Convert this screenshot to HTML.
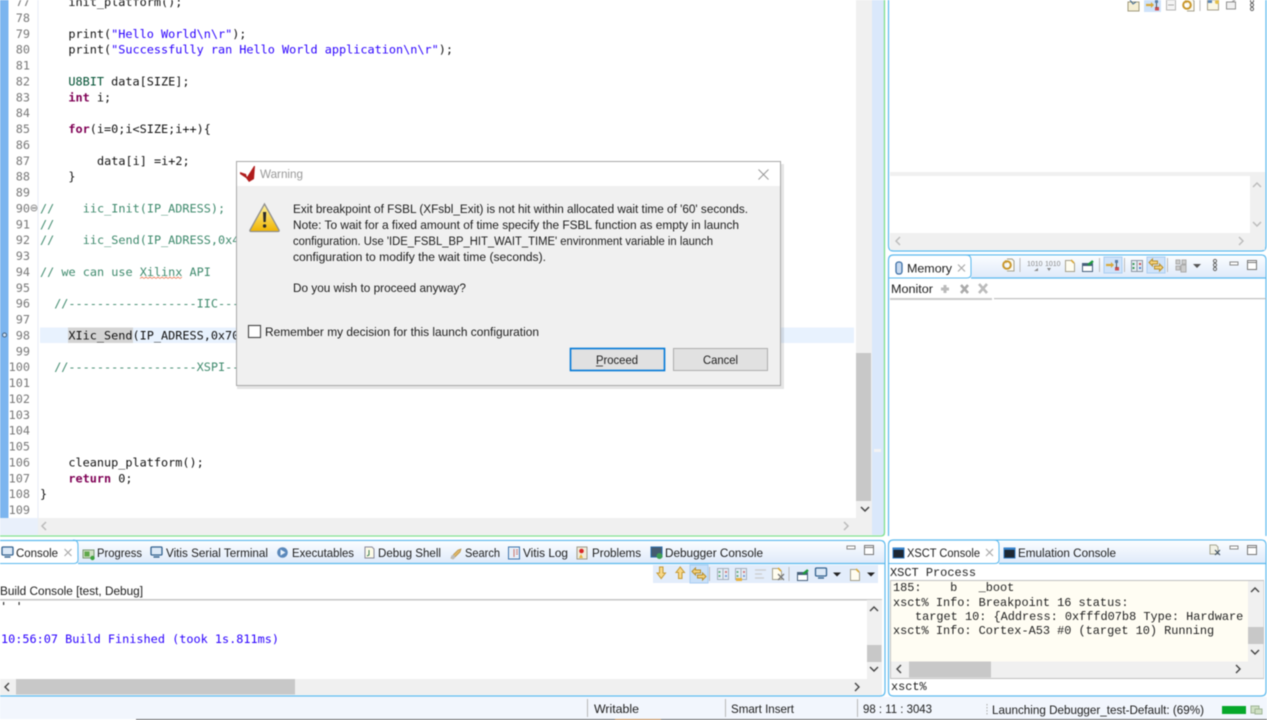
<!DOCTYPE html>
<html><head><meta charset="utf-8"><title>Vitis Debug</title>
<style>
html,body{margin:0;padding:0;background:#fff;width:1267px;height:720px;overflow:hidden}
svg{display:block;position:absolute;left:0;top:0;filter:blur(.4px)}
.c{font-family:"DejaVu Sans Mono","Liberation Mono",monospace;font-size:11.84px;fill:#111;white-space:pre}
.n{fill:#787878;text-anchor:end}
.g{fill:#3f8a6d}
.k{fill:#7f0055;font-weight:bold}
.s{fill:#2a00ff}
.u{font-family:"Liberation Sans",sans-serif;font-size:12.4px;fill:#1c1c1c}
.x{font-family:"Liberation Mono",monospace;font-size:11.9px;fill:#222;white-space:pre}
</style></head><body>
<svg width="1267" height="720" viewBox="0 0 1267 720" xmlns="http://www.w3.org/2000/svg">
<defs>
<linearGradient id="tb" x1="0" y1="0" x2="0" y2="1"><stop offset="0" stop-color="#fbfdff"/><stop offset="1" stop-color="#dfeafa"/></linearGradient>
<linearGradient id="wy" x1="0" y1="0" x2="0" y2="1"><stop offset="0" stop-color="#fff3a0"/><stop offset="1" stop-color="#f0b400"/></linearGradient>
<g id="chain" fill="none" stroke="#666" stroke-width="1"><circle cx="0" cy="-4" r="1.6"/><circle cx="0" cy="0" r="1.6"/><circle cx="0" cy="4" r="1.6"/></g>
<g id="min"><rect x="-4" y="-2" width="8" height="3" fill="#fff" stroke="#888"/></g>
<g id="max"><rect x="-4.5" y="-4.5" width="9" height="9" fill="#fff" stroke="#777"/><path d="M-4.5-2.5h9" stroke="#777"/></g>
<g id="close" stroke="#aaa" stroke-width="1.2" fill="none"><path d="M-3.5-3.5l7 7M3.5-3.5l-7 7"/></g>
<g id="mon"><rect x="-5.5" y="-5" width="11" height="8" rx="1" fill="#dce9f7" stroke="#33628f" stroke-width="1.3"/><path d="M-3 5h6" stroke="#33628f" stroke-width="1.4"/></g>
<g id="term"><rect x="-5.5" y="-5" width="11" height="10" fill="#1d2733" stroke="#2f78c0"/><path d="M-5.5-4h11" stroke="#3a8ad6" stroke-width="1.5"/></g>
<g id="ar"><path d="M-4-1.5h8L0 2.5z" fill="#222"/></g>
<g id="gold"><path d="M-7-2.500l3.500-3.500v2h5v3h-5v2z" fill="#f3d27c" stroke="#b98f2e" stroke-width="1"/><path d="M7 2.500l-3.500 3.500v-2h-5v-3h5v-2z" fill="#f3d27c" stroke="#b98f2e" stroke-width="1"/></g>
<g id="docgold"><path d="M-1-6h5l2 2v10h-7" fill="#fbfaf0" stroke="#a5a08c"/><circle cx="-1" cy="0" r="3.800" fill="none" stroke="#c9972c" stroke-width="2"/><path d="M-3-5l3 1-2 2.500z" fill="#c9972c"/></g>
<g id="doc"><path d="M-4.5-5.5h6l3 3v8h-9z" fill="#fffdf0" stroke="#a5a08c"/><path d="M1-6l3 3" stroke="#d9a93a" stroke-width="1.6"/></g>
<g id="pin"><rect x="-5.5" y="-2.5" width="10" height="8" fill="#fff" stroke="#47607c"/><path d="M-5.5-1h10" stroke="#47607c" stroke-width="2"/><path d="M0-1l5-4" stroke="#1e9a3c" stroke-width="2.4"/></g>
<g id="stack"><rect x="-5.500" y="-5.500" width="11" height="11" fill="#e6edf4" stroke="#8b97a4"/><path d="M0-5.500v11" stroke="#8b97a4"/><path d="M-3.500-3v2M-3.500 1v2" stroke="#3c9a5a" stroke-width="2"/><path d="M3-3v2" stroke="#cf4d4d" stroke-width="2"/><path d="M3 1v2" stroke="#4d7fcf" stroke-width="2"/></g>
<g id="flow"><path d="M-7 0h6" stroke="#d9a93a" stroke-width="2.2"/><path d="M-2-3l3 3-3 3z" fill="#d9a93a"/><rect x="2" y="-5" width="3" height="3" fill="#5a7ea6"/><rect x="2" y="2" width="4" height="3.5" fill="#cf4d4d"/><path d="M3.500-2v5" stroke="#555"/></g>
</defs>

<rect width="1267" height="720" fill="#fff"/>

<!-- editor chrome -->
<rect x="0" y="0" width="8.500" height="518" fill="#7cb5ef"/>
<rect x="37.500" y="0" width="1" height="518" fill="#e6edf6"/>
<rect x="0" y="518" width="38" height="17" fill="#e9f0fb"/>
<rect x="38" y="518" width="834" height="17" fill="#f0f0f0"/>
<rect x="856" y="0" width="16" height="518" fill="#f0f0f0"/>
<rect x="856" y="353" width="15" height="148" fill="#c8c8c8"/>
<path d="M861 507l4 4 4-4" fill="none" stroke="#444" stroke-width="1.500"/>
<path d="M844 522l4 4-4 4" fill="none" stroke="#bbb" stroke-width="1.500"/>
<path d="M46 522l-4 4 4 4" fill="none" stroke="#bbb" stroke-width="1.500"/>
<rect x="872" y="0" width="12" height="535" fill="#dae8fb"/>
<rect x="874" y="449" width="7" height="3" fill="#f3f3f3"/>
<path d="M0 536H881q3.500 0 3.500-3.500V0" fill="none" stroke="#7fe08f" stroke-width="1.300"/>

<!-- current line -->
<rect x="40" y="327.500" width="814" height="15.500" fill="#e8f2fe"/>
<rect x="68" y="327.500" width="65" height="15.500" fill="#d4d4d4"/>

<!-- line numbers -->
<text x="30" y="22" class="c n">78</text><text x="30" y="6.100" class="c n">77</text><text x="30" y="37.900" class="c n">79</text><text x="30" y="53.700" class="c n">80</text><text x="30" y="69.600" class="c n">81</text><text x="30" y="85.500" class="c n">82</text><text x="30" y="101.400" class="c n">83</text><text x="30" y="117.200" class="c n">84</text><text x="30" y="133.100" class="c n">85</text><text x="30" y="149" class="c n">86</text><text x="30" y="164.800" class="c n">87</text><text x="30" y="180.700" class="c n">88</text><text x="30" y="196.600" class="c n">89</text><text x="30" y="212.500" class="c n">90</text><text x="30" y="228.300" class="c n">91</text><text x="30" y="244.200" class="c n">92</text><text x="30" y="260.100" class="c n">93</text><text x="30" y="276" class="c n">94</text><text x="30" y="291.800" class="c n">95</text><text x="30" y="307.700" class="c n">96</text><text x="30" y="323.600" class="c n">97</text><text x="30" y="339.400" class="c n">98</text><text x="30" y="355.300" class="c n">99</text><text x="30" y="371.200" class="c n">100</text><text x="30" y="387.100" class="c n">101</text><text x="30" y="402.900" class="c n">102</text><text x="30" y="418.800" class="c n">103</text><text x="30" y="434.700" class="c n">104</text><text x="30" y="450.500" class="c n">105</text><text x="30" y="466.400" class="c n">106</text><text x="30" y="482.300" class="c n">107</text><text x="30" y="498.200" class="c n">108</text><text x="30" y="514" class="c n">109</text>
<circle cx="34" cy="208" r="3" fill="#eee" stroke="#999"/><path d="M32 208h4" stroke="#777"/>
<circle cx="4.500" cy="335" r="2" fill="#cfe2f5" stroke="#44617f"/>

<!-- code -->
<text x="68.400" y="6.100" class="c">init_platform();</text>
<text x="68.400" y="37.900" class="c">print(<tspan class="s">"Hello World\n\r"</tspan>);</text>
<text x="68.400" y="53.700" class="c">print(<tspan class="s">"Successfully ran Hello World application\n\r"</tspan>);</text>
<text x="68.400" y="85.500" class="c"><tspan fill="#005032">U8BIT</tspan> data[SIZE];</text>
<text x="68.400" y="101.400" class="c"><tspan class="k">int</tspan> i;</text>
<text x="68.400" y="133.100" class="c"><tspan class="k">for</tspan>(i=0;i&lt;SIZE;i++){</text>
<text x="97" y="164.800" class="c">data[i] =i+2;</text>
<text x="68.400" y="180.700" class="c">}</text>
<text x="40" y="212.500" class="c g" xml:space="preserve">//    iic_Init(IP_ADRESS);</text>
<text x="40" y="228.300" class="c g">//</text>
<text x="40" y="244.200" class="c g" xml:space="preserve">//    iic_Send(IP_ADRESS,0x4</text>
<text x="40" y="276" class="c g">// we can use Xilinx API</text>
<path d="M140 278.500l2-1.500 2 1.500 2-1.500 2 1.500 2-1.500 2 1.500 2-1.500 2 1.500 2-1.500 2 1.500 2-1.500 2 1.500 2-1.500 2 1.500 2-1.500 2 1.500 2-1.500 2 1.500 2-1.500 2 1.500 2-1.500" fill="none" stroke="#f08a6a" stroke-width=".8"/>
<text x="54.200" y="307.700" class="c g">//------------------IIC------</text>
<text x="68.400" y="339.400" class="c">XIic_Send(IP_ADRESS,0x70</text>
<text x="54.200" y="371.200" class="c g">//------------------XSPI-----</text>
<text x="68.400" y="466.400" class="c">cleanup_platform();</text>
<text x="68.400" y="482.300" class="c"><tspan class="k">return</tspan> 0;</text>
<text x="40" y="498.200" class="c">}</text>

<!-- right top panel -->
<path d="M888.500 0V246q0 5 5 5H1261q5 0 5-5V0" fill="#fff" stroke="#5ab9ee" stroke-width="1.200"/>
<rect x="890" y="172" width="375" height="4" fill="#f0f0f0"/>
<rect x="1250" y="176" width="15" height="57" fill="#f0f0f0"/>
<rect x="890" y="233" width="375" height="17" fill="#f0f0f0"/>
<path d="M1253 187l4-4 4 4M1253 222l4 4 4-4" fill="none" stroke="#bbb" stroke-width="1.400"/>
<path d="M900 237l-4 4 4 4M1239 237l4 4-4 4" fill="none" stroke="#bbb" stroke-width="1.400"/>
<rect x="1144" y="0" width="17" height="12" fill="#cfe3fa"/>
<g transform="translate(1133,5)"><rect x="-5" y="-3" width="11" height="9" fill="#f6efd4" stroke="#a09a7c"/><path d="M-3-5l3 4 3-2" stroke="#34618e" fill="none"/></g>
<use href="#flow" transform="translate(1153,5)"/>
<g transform="translate(1171,5)"><rect x="-4.500" y="-5" width="9" height="10" fill="#f4f4f4" stroke="#b5b5b5"/><path d="M-3 0h6" stroke="#aaa"/></g>
<use href="#docgold" transform="translate(1188,5)"/>
<rect x="1199.500" y="0" width="1" height="11" fill="#bbb"/>
<rect x="1207.500" y="0" width="11" height="10" fill="#fbf8e6" stroke="#a5a08c"/><rect x="1208" y="0" width="4" height="3" fill="#5a86b8"/><circle cx="1217" cy="2" r="2" fill="#e5c04a"/>
<rect x="1226.500" y="2" width="9" height="7" fill="#f2f2f2" stroke="#909090"/><path d="M1232 2l4-3" stroke="#999" stroke-width="1.400"/>
<use href="#chain" transform="translate(1252,5)"/>

<!-- memory panel -->
<path d="M888.500 536V260q0-5 5-5H1261q5 0 5 5V536" fill="#fff" stroke="#5ab9ee" stroke-width="1.200"/>
<path d="M971 278H1265.500V260q0-4.500-4.500-4.500H970" fill="url(#tb)"/>
<path d="M889 278H967q4 0 4-4V260q0-5-5-5" fill="none" stroke="#5ab9ee"/>
<path d="M971 278H1266" stroke="#5ab9ee" stroke-width="1.200"/>
<rect x="896" y="262" width="6" height="12" rx="2.500" fill="#c8daf0" stroke="#3b6ea5" stroke-width="1.300"/>
<text x="907" y="272.500" class="u" textLength="45" lengthAdjust="spacingAndGlyphs">Memory</text>
<use href="#close" transform="translate(961.500,268)"/>
<use href="#docgold" transform="translate(1008,265)"/>
<rect x="1019.500" y="258" width="1" height="14" fill="#bbb"/>
<text x="1027" y="266" font-family="Liberation Sans" font-size="7" fill="#888">1010</text><path d="M1034 271l4-3v3z" fill="#888"/>
<text x="1045" y="266" font-family="Liberation Sans" font-size="7" fill="#888">1010</text><path d="M1047 268h4l-2 3z" fill="#888"/>
<use href="#doc" transform="translate(1070,266)"/>
<use href="#pin" transform="translate(1088,266)"/>
<rect x="1099" y="258" width="1" height="14" fill="#bbb"/>
<rect x="1104" y="257" width="18" height="16" fill="#cfe3fa" stroke="#a9cdf2"/>
<use href="#flow" transform="translate(1113,265)"/>
<rect x="1124" y="258" width="1" height="14" fill="#bbb"/>
<use href="#stack" transform="translate(1137,266)"/>
<rect x="1147" y="257" width="18" height="16" fill="#cfe3fa" stroke="#a9cdf2"/>
<use href="#gold" transform="translate(1156,265)"/>
<rect x="1167" y="258" width="1" height="14" fill="#bbb"/>
<g transform="translate(1181,265)" fill="#ccc" stroke="#aaa"><rect x="-5" y="-5" width="4" height="4"/><rect x="1" y="-5" width="4" height="4"/><rect x="-5" y="1" width="4" height="4"/><rect x="0" y="0" width="5" height="7"/></g>
<path d="M1193 264h8l-4 4z" fill="#555"/>
<use href="#chain" transform="translate(1215,265)"/>
<use href="#min" transform="translate(1234,264)"/>
<use href="#max" transform="translate(1252,265)"/>
<text x="891" y="293" class="u" textLength="42" lengthAdjust="spacingAndGlyphs">Monitor</text>
<path d="M945 285v8M941 289h8" stroke="#bbb" stroke-width="3"/>
<path d="M961 285l7 8M968 285l-7 8" stroke="#aaa" stroke-width="2.600"/>
<path d="M979 284l8 9M987 284l-8 9" stroke="#bbb" stroke-width="2.600"/>
<rect x="890" y="298" width="102" height="2" fill="#ccc"/>
<rect x="994" y="298" width="272" height="1.200" fill="#c0c0c0"/>

<!-- bottom left console panel -->
<path d="M0 540.500H880q5 0 5 5V691q0 5-5 5H0" fill="#fff" stroke="#5ab9ee" stroke-width="1.200"/>
<path d="M78 563.500H884.500V546q0-5-5-5H76z" fill="url(#tb)"/>
<path d="M0 563.500H74q4 0 4-4V545q0-5-5-5" fill="none" stroke="#5ab9ee"/>
<path d="M78 563.500H885" stroke="#5ab9ee" stroke-width="1.200"/>
<use href="#mon" transform="translate(7.500,552)"/>
<text x="16" y="557" class="u" textLength="42" lengthAdjust="spacingAndGlyphs">Console</text>
<use href="#close" transform="translate(68,552.500)"/>
<g transform="translate(88.500,554)"><rect x="-5.500" y="-4" width="11" height="8" fill="#cfe0c4" stroke="#7c9a72"/><rect x="-4" y="-2.500" width="5" height="5" fill="#5fa84a"/><circle cx="4" cy="4" r="2.200" fill="#3ba03b"/></g>
<text x="97" y="557" class="u" textLength="45" lengthAdjust="spacingAndGlyphs">Progress</text>
<use href="#mon" transform="translate(156.500,552)"/>
<text x="166" y="557" class="u" textLength="102" lengthAdjust="spacingAndGlyphs">Vitis Serial Terminal</text>
<circle cx="282.500" cy="552.500" r="5.300" fill="#5a88bb"/><path d="M280.500 549.500l5 3-5 3z" fill="#eaf2fb"/>
<text x="292" y="557" class="u" textLength="62" lengthAdjust="spacingAndGlyphs">Executables</text>
<g transform="translate(369,553)"><path d="M-4-6h7l2 2v9h-9z" fill="#fdfbe8" stroke="#889"/><path d="M0-3v5l-2 1" stroke="#3a7a55" fill="none"/></g>
<text x="378" y="557" class="u" textLength="63" lengthAdjust="spacingAndGlyphs">Debug Shell</text>
<path d="M451 558l3-4 4-4 3-1-1 3-4 4-3 3z" fill="#e0b868" stroke="#b08a40" stroke-width=".7"/><circle cx="453" cy="557" r="2" fill="#bbb"/>
<text x="465" y="557" class="u" textLength="35" lengthAdjust="spacingAndGlyphs">Search</text>
<g transform="translate(514,553)"><rect x="-5.500" y="-6" width="11" height="12" fill="#e8eff8" stroke="#3f75ad"/><path d="M0-4v8M2-3h2M2-1h2M2 1h2" stroke="#c9756e"/></g>
<text x="523" y="557" class="u" textLength="45" lengthAdjust="spacingAndGlyphs">Vitis Log</text>
<g transform="translate(582,553)"><rect x="-5" y="-6" width="10" height="12" fill="#f1ecda" stroke="#9d9a8a"/><circle cx="-.500" cy="-2" r="2.300" fill="#d92626"/><path d="M-3 5l2-4 2 4z" fill="#e4b13a"/></g>
<text x="592" y="557" class="u" textLength="49" lengthAdjust="spacingAndGlyphs">Problems</text>
<g transform="translate(656.500,553)"><rect x="-5.500" y="-6" width="11" height="10" fill="#445c70" stroke="#2d6da8"/><circle cx="3" cy="3" r="3" fill="#3d9e55"/></g>
<text x="665" y="557" class="u" textLength="98" lengthAdjust="spacingAndGlyphs">Debugger Console</text>
<use href="#min" transform="translate(851,548)"/>
<use href="#max" transform="translate(869,550)"/>

<!-- console toolbar -->
<rect x="653" y="565" width="225" height="18" fill="#e3edfb"/>
<path d="M659.500 567h3.500v6h2.500l-4.300 5.500-4.200-5.500h2.500z" fill="#f8d98a" stroke="#c69a35"/>
<path d="M678.500 578.500h3.500v-6h2.500l-4.300-5.500-4.200 5.500h2.500z" fill="#f8d98a" stroke="#c69a35"/>
<rect x="690" y="565" width="18" height="18" fill="#c9e0f9" stroke="#a9cdf2"/>
<use href="#gold" transform="translate(699,574)"/>
<rect x="709" y="567" width="1" height="14" fill="#bbb"/>
<g opacity=".7"><use href="#stack" transform="translate(723,574)"/><use href="#stack" transform="translate(741,574)"/></g>
<path d="M736 578h6v3h-6z" fill="#e6b23d"/>
<path d="M755 570h11M755 574h7M755 578h9" stroke="#ccc" stroke-width="1.300"/>
<use href="#doc" transform="translate(777,574)"/><path d="M778 574l6 6M784 574l-6 6" stroke="#777" stroke-width="1.300"/>
<rect x="788.500" y="567" width="1" height="14" fill="#bbb"/>
<use href="#pin" transform="translate(803,575)"/>
<use href="#mon" transform="translate(821,573)"/>
<use href="#ar" transform="translate(837,574)"/>
<use href="#doc" transform="translate(855,575)"/>
<use href="#ar" transform="translate(871,574)"/>

<text x="0" y="595" class="u" textLength="143" lengthAdjust="spacingAndGlyphs">Build Console [test, Debug]</text>
<rect x="0" y="599" width="882" height="1.500" fill="#c6c6c6"/>
<rect x="3" y="602" width="1.200" height="3" fill="#333"/><rect x="18.500" y="602" width="1.200" height="3" fill="#333"/>
<text x="1" y="643" class="c s" textLength="278" lengthAdjust="spacingAndGlyphs">10:56:07 Build Finished (took 1s.811ms)</text>
<rect x="867" y="600" width="15" height="79" fill="#f0f0f0"/>
<rect x="867" y="645" width="14.500" height="17" fill="#c8c8c8"/>
<path d="M870 611l4-4 4 4M870 667l4 4 4-4" fill="none" stroke="#444" stroke-width="1.400"/>
<rect x="0" y="679" width="882" height="16" fill="#f0f0f0"/>
<rect x="16" y="679" width="279" height="15.500" fill="#c8c8c8"/>
<path d="M9 683l-4 4 4 4M855 683l4 4-4 4" fill="none" stroke="#444" stroke-width="1.400"/>

<!-- XSCT panel -->
<path d="M888.500 691V545q0-5 5-5H1261q5 0 5 5V691q0 5-5 5H893.500q-5 0-5-5z" fill="#fff" stroke="#5ab9ee" stroke-width="1.200"/>
<path d="M999 563.500H1265.500V545q0-4.500-4.500-4.500H998z" fill="url(#tb)"/>
<path d="M889 563.500H995q4 0 4-4V545q0-5-5-5" fill="none" stroke="#5ab9ee"/>
<path d="M999 563.500H1266" stroke="#5ab9ee" stroke-width="1.200"/>
<use href="#term" transform="translate(898.500,553)"/>
<text x="907" y="557" class="u" textLength="73" lengthAdjust="spacingAndGlyphs">XSCT Console</text>
<use href="#close" transform="translate(989.500,552.500)"/>
<use href="#term" transform="translate(1009.500,553)"/>
<text x="1018" y="557" class="u" textLength="98" lengthAdjust="spacingAndGlyphs">Emulation Console</text>
<g transform="translate(1214,550)"><path d="M-4-5h6l2 2v7h-8z" fill="#f2f2e6" stroke="#a5a590"/><path d="M1 0l5 5M6 0l-5 5" stroke="#456" stroke-width="1.200"/></g>
<use href="#min" transform="translate(1234,548)"/>
<use href="#max" transform="translate(1252,550)"/>
<text x="890" y="576" class="x" textLength="86" lengthAdjust="spacingAndGlyphs">XSCT Process</text>
<rect x="890.500" y="580.500" width="373" height="98" fill="#fffdf3" stroke="#c0c0c0"/>
<text x="893" y="591" class="x" xml:space="preserve">185:    b   _boot</text>
<text x="893" y="606" class="x">xsct% Info: Breakpoint 16 status:</text>
<text x="915" y="620" class="x">target 10: {Address: 0xfffd07b8 Type: Hardware</text>
<text x="893" y="634" class="x">xsct% Info: Cortex-A53 #0 (target 10) Running</text>
<rect x="1248" y="581" width="15.500" height="97" fill="#f0f0f0"/>
<rect x="1248" y="627" width="15.500" height="17" fill="#c8c8c8"/>
<path d="M1251 592l4-4 4 4M1251 650l4 4 4-4" fill="none" stroke="#444" stroke-width="1.400"/>
<rect x="891" y="661.500" width="372.500" height="16.500" fill="#f0f0f0"/>
<rect x="909" y="661.500" width="82" height="16" fill="#c8c8c8"/>
<path d="M901 665l-4 4 4 4M1236 665l4 4-4 4" fill="none" stroke="#444" stroke-width="1.400"/>
<text x="891" y="690" class="x">xsct%</text>

<!-- status bar -->
<rect x="0" y="697" width="1267" height="22" fill="#f2f6fd"/>
<rect x="136" y="719" width="1131" height="1" fill="#666"/>
<rect x="615" y="719" width="46" height="1" fill="#c08a50"/>
<rect x="587" y="699" width="1" height="18" fill="#b8b8b8"/>
<rect x="725" y="699" width="1" height="18" fill="#b8b8b8"/>
<rect x="857" y="699" width="1" height="18" fill="#b8b8b8"/>
<path d="M987 704v12" stroke="#aaa" stroke-dasharray="1.500 1.500"/>
<text x="594" y="713" class="u" textLength="45" lengthAdjust="spacingAndGlyphs">Writable</text>
<text x="731" y="713" class="u" textLength="63" lengthAdjust="spacingAndGlyphs">Smart Insert</text>
<text x="863" y="713" class="u" textLength="69" lengthAdjust="spacingAndGlyphs">98 : 11 : 3043</text>
<text x="992" y="714" class="u" textLength="212" lengthAdjust="spacingAndGlyphs">Launching Debugger_test-Default: (69%)</text>
<rect x="1222" y="706" width="24" height="8" fill="#06a82a"/>
<rect x="1251" y="706" width="8" height="7" fill="#cfe0c4" stroke="#9fb596"/><rect x="1255" y="709" width="7" height="5" fill="#cfe0c4" stroke="#9fb596"/>

<!-- dialog -->
<rect x="237" y="164" width="547" height="225" fill="#000" opacity=".1"/>
<rect x="236.500" y="161.500" width="544" height="224" fill="#f0f0f0" stroke="#a8a8a8"/>
<rect x="237" y="162" width="543" height="24" fill="#fff"/>
<path d="M240 172l6 2 1 3 7-11 1 0-1 13-5 3-3-4-6-4z" fill="#b01c1c"/>
<text x="260" y="178" class="u" style="fill:#999" textLength="43" lengthAdjust="spacingAndGlyphs">Warning</text>
<path d="M758.500 169.500l10 10M768.500 169.500l-10 10" stroke="#9a9a9a" stroke-width="1"/>
<path d="M264.500 204l14.500 26q.5 1.500-1 1.500h-27q-1.500 0-1-1.500z" fill="url(#wy)" stroke="#8f8f8f" stroke-width="1.300"/>
<path d="M263 212h3.200l-.5 10h-2.200z" fill="#2a2a2a"/><circle cx="264.600" cy="226" r="1.700" fill="#2a2a2a"/>
<text x="293" y="213" class="u" textLength="455" lengthAdjust="spacingAndGlyphs">Exit breakpoint of FSBL (XFsbl_Exit) is not hit within allocated wait time of '60' seconds.</text>
<text x="293" y="229" class="u" textLength="446" lengthAdjust="spacingAndGlyphs">Note: To wait for a fixed amount of time specify the FSBL function as empty in launch</text>
<text x="293" y="245" class="u" textLength="420" lengthAdjust="spacingAndGlyphs">configuration. Use 'IDE_FSBL_BP_HIT_WAIT_TIME' environment variable in launch</text>
<text x="293" y="261" class="u" textLength="253" lengthAdjust="spacingAndGlyphs">configuration to modify the wait time (seconds).</text>
<text x="293" y="292" class="u" textLength="173" lengthAdjust="spacingAndGlyphs">Do you wish to proceed anyway?</text>
<rect x="248.500" y="325.500" width="12" height="12" fill="#fff" stroke="#444" stroke-width="1.100"/>
<text x="265" y="336" class="u" textLength="274" lengthAdjust="spacingAndGlyphs">Remember my decision for this launch configuration</text>
<rect x="570.500" y="348.500" width="94" height="22" fill="#e1e1e1" stroke="#0078d7" stroke-width="1.600"/>
<text x="596" y="364" class="u" textLength="42" lengthAdjust="spacingAndGlyphs">Proceed</text>
<path d="M596 366h7" stroke="#222" stroke-width=".8"/>
<rect x="673.500" y="348.500" width="94" height="22" fill="#e1e1e1" stroke="#adadad"/>
<text x="703" y="364" class="u" textLength="35" lengthAdjust="spacingAndGlyphs">Cancel</text>
</svg>
</body></html>
